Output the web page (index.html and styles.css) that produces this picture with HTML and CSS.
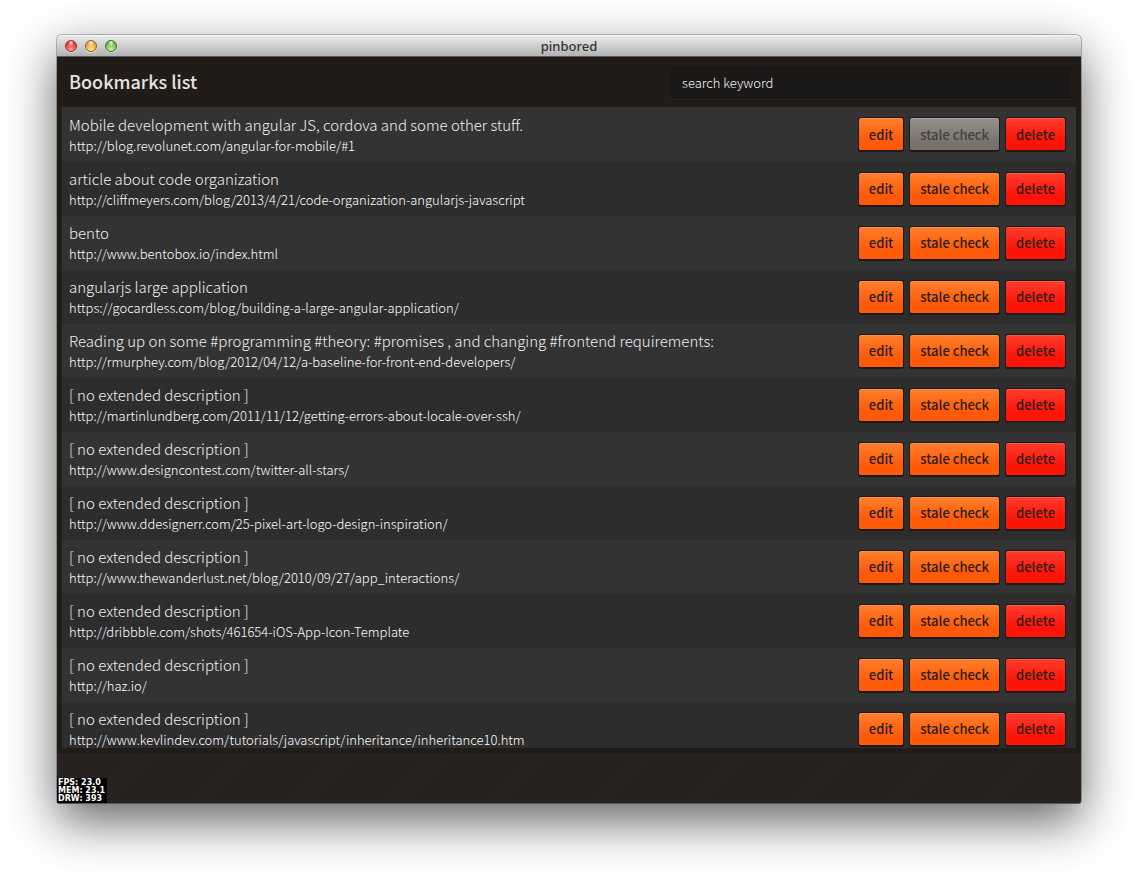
FILE: index.html
```
<!DOCTYPE html>
<html lang="en">
<head>
<meta charset="utf-8">
<title>pinbored</title>
<link rel="stylesheet" href="styles.css">
</head>
<body>
<div class="window">
  <div class="titlebar">
    <div class="lights">
      <button class="light light-close" aria-label="Close"></button>
      <button class="light light-minimize" aria-label="Minimize"></button>
      <button class="light light-zoom" aria-label="Zoom"></button>
    </div>
    <span class="window-title">pinbored</span>
  </div>
  <main class="panel">
    <header class="header">
      <h1 class="heading">Bookmarks list</h1>
      <input class="search" type="text" aria-label="Search" placeholder="search keyword">
    </header>
    <ul class="list" id="list"></ul>
  </main>
  <footer class="footer">
    <div class="stats"><span>FPS: 23.0</span><span>MEM: 23.1</span><span>DRW: 393</span></div>
  </footer>
</div>
<script src="app.js"></script>
</body>
</html>
```
FILE: styles.css
```
* { box-sizing: border-box; }
body {
  margin: 0;
  height: 100vh;
  padding: 35px 57px 79px;
  background: #fff;
  font-family: "Noto Sans CJK SC", "Noto Sans", sans-serif;
  overflow: hidden;
}
.window {
  height: 100%;
  display: flex;
  flex-direction: column;
  border-radius: 5px 5px 3px 3px;
  background: #282320;
  box-shadow: 0 0 0 1px rgba(0, 0, 0, 0.25), 0 18px 50px rgba(0, 0, 0, 0.62);
}
.titlebar {
  flex: none;
  height: 22px;
  display: grid;
  grid-template-columns: 1fr auto 1fr;
  align-items: center;
  padding: 0 8px;
  border-bottom: 1px solid #5c5c5c;
  border-radius: 5px 5px 0 0;
  background: linear-gradient(#ececec, #b2b2b2);
  box-shadow: inset 0 1px 0 #f8f8f8;
}
.lights { display: flex; gap: 8px; }
.light {
  width: 12px;
  height: 12px;
  padding: 0;
  border: 1px solid;
  border-radius: 50%;
  box-shadow: 0 1px 0 rgba(255, 255, 255, 0.5);
}
.light-close {
  border-color: #8e3233;
  background: radial-gradient(ellipse at 50% 15%, #ffe3e3 0, rgba(255, 220, 220, 0) 38%), radial-gradient(circle at 50% 90%, #ff9d98, #e3383c 70%);
}
.light-minimize {
  border-color: #8f5e29;
  background: radial-gradient(ellipse at 50% 15%, #fff3df 0, rgba(255, 240, 220, 0) 38%), radial-gradient(circle at 50% 90%, #ffe98d, #e99d3c 70%);
}
.light-zoom {
  border-color: #3f702f;
  background: radial-gradient(ellipse at 50% 15%, #effbe9 0, rgba(230, 250, 220, 0) 38%), radial-gradient(circle at 50% 90%, #c9f2a1, #68b557 70%);
}
.window-title {
  font-family: "Noto Sans", "Open Sans", sans-serif;
  font-size: 13px;
  font-weight: 500;
  line-height: 20px;
  color: #333;
}
.panel {
  flex: 1;
  min-height: 0;
  display: flex;
  flex-direction: column;
  padding: 0 5px 5px;
  background: #221c18;
}
.header {
  flex: none;
  height: 50px;
  display: flex;
  align-items: center;
  justify-content: space-between;
  padding: 0 5px 0 7px;
}
.heading {
  margin: 0;
  padding-bottom: 2px;
  font-size: 18px;
  font-weight: 500;
  line-height: 26px;
  color: #e6e4e2;
}
.search {
  width: 40%;
  max-width: 400px;
  height: 33px;
  padding: 1px 11px 0;
  border: 0;
  border-radius: 2px;
  background: #1a1917;
  box-shadow: 0 1px 0 #30261e;
  font: 300 13px "Noto Sans CJK SC", sans-serif;
  color: #f4f4f4;
}
.search::placeholder { color: #f4f4f4; opacity: 1; }
.list {
  flex: 1;
  min-height: 0;
  margin: 0;
  padding: 0;
  overflow: hidden;
  list-style: none;
}
.row {
  height: 54px;
  display: flex;
  align-items: center;
  gap: 16px;
  padding: 0 10px 0 7px;
  background: #2d2d2d;
}
.row:nth-child(odd) { background: #333; }
.row:first-child { height: 55px; }
.text { flex: 1; min-width: 0; font-weight: 300; }
.name, .url { display: block; white-space: nowrap; }
.name { font-size: 15px; line-height: 22px; color: #f0f0f0; }
.url { font-size: 13px; line-height: 20px; color: #fff; text-decoration: none; }
.actions { display: flex; gap: 5px; }
.btn {
  height: 35px;
  padding: 0 10px;
  border: 1px solid #1c1918;
  border-bottom-width: 2px;
  border-radius: 3px;
  font: 500 13px "Noto Sans CJK SC", sans-serif;
  color: #2b1d17;
}
.btn-primary { background: linear-gradient(#ff7f2c, #ff5a08 70%); box-shadow: inset 0 1px 0 #ff9247; }
.btn-danger { background: linear-gradient(#ff3c2c, #ff1408 70%); box-shadow: inset 0 1px 0 #ff5a45; }
.btn:disabled { background: linear-gradient(#96908a, #77716b 80%); box-shadow: inset 0 1px 0 #a9a39d; color: #46413d; }
.footer {
  flex: none;
  height: 50px;
  display: flex;
  align-items: flex-end;
  border-radius: 0 0 3px 3px;
  background: repeating-linear-gradient(135deg, #282320 0 3px, #26211e 3px 5px);
  box-shadow: 0 1px 0 #5b5654;
}
.stats {
  display: flex;
  flex-direction: column;
  width: 50px;
  height: 25px;
  padding: 1px 0 0 1px;
  background: #000;
  font: bold 8px/8px "DejaVu Sans", sans-serif;
  color: #fff;
  white-space: nowrap;
}
```
FILE: app.js
```
const none = "[ no extended description ]";
const bookmarks = [
  ["Mobile development with angular JS, cordova and some other stuff.", "http://blog.revolunet.com/angular-for-mobile/#1", true],
  ["article about code organization", "http://cliffmeyers.com/blog/2013/4/21/code-organization-angularjs-javascript"],
  ["bento", "http://www.bentobox.io/index.html"],
  ["angularjs large application", "https://gocardless.com/blog/building-a-large-angular-application/"],
  ["Reading up on some #programming #theory: #promises , and changing #frontend requirements:", "http://rmurphey.com/blog/2012/04/12/a-baseline-for-front-end-developers/"],
  [none, "http://martinlundberg.com/2011/11/12/getting-errors-about-locale-over-ssh/"],
  [none, "http://www.designcontest.com/twitter-all-stars/"],
  [none, "http://www.ddesignerr.com/25-pixel-art-logo-design-inspiration/"],
  [none, "http://www.thewanderlust.net/blog/2010/09/27/app_interactions/"],
  [none, "http://dribbble.com/shots/461654-iOS-App-Icon-Template"],
  [none, "http://haz.io/"],
  [none, "http://www.kevlindev.com/tutorials/javascript/inheritance/inheritance10.htm"]
];
document.getElementById("list").innerHTML = bookmarks.map(([name, url, checking]) => `
  <li class="row">
    <div class="text"><span class="name">${name}</span><a class="url" href="${url}">${url}</a></div>
    <div class="actions">
      <button class="btn btn-primary">edit</button>
      <button class="btn btn-primary"${checking ? " disabled" : ""}>stale check</button>
      <button class="btn btn-danger">delete</button>
    </div>
  </li>`).join("");
```
